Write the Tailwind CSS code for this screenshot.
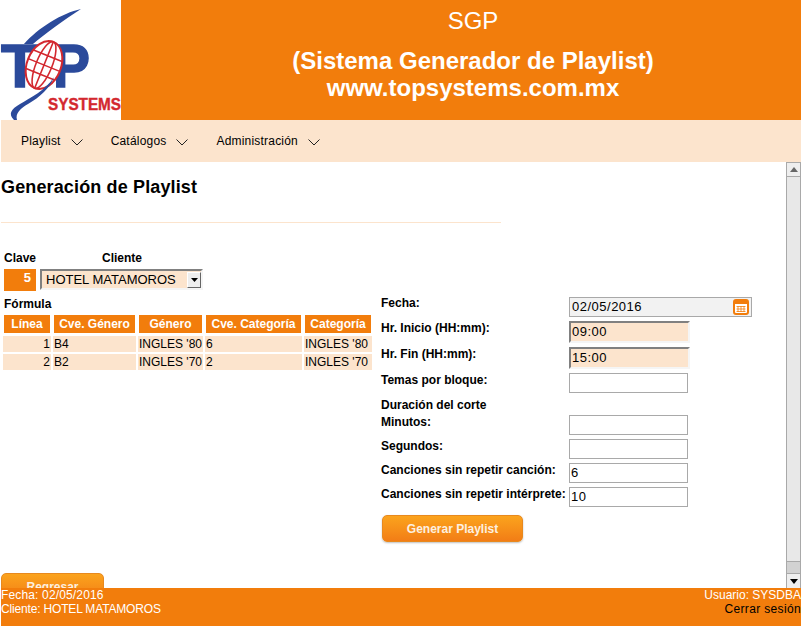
<!DOCTYPE html>
<html lang="es">
<head>
    <meta charset="UTF-8">
    <title>SGP</title>
    <script src="https://cdn.jsdelivr.net/npm/@tailwindcss/browser@4"></script>
</head>
<body class="bg-white h-[626px] w-[801px] overflow-hidden flex flex-col font-['Liberation_Sans',Arial,sans-serif] text-xs text-black">

<!-- encabezado -->
<header class="h-[120px] flex shrink-0">
    <div class="w-[121px] bg-white">
        <svg width="121" height="120" viewBox="0 0 121 120">
            <path d="M81 9 C62 13 38 28 24 44 L33 44 C46 33 64 20 81 9Z" fill="#2b4a9b"/>
            <text x="1" y="87" font-family="Liberation Sans" font-weight="700" font-size="62" stroke="#2b4a9b" stroke-width="1.5" fill="#2b4a9b">T</text>
            <text x="53" y="87" font-family="Liberation Sans" font-weight="700" font-size="62" textLength="37" lengthAdjust="spacingAndGlyphs" stroke="#2b4a9b" stroke-width="1.5" fill="#2b4a9b">P</text>
            <g transform="rotate(22 44 65)" fill="none" stroke="#d3282f" stroke-width="1.6">
                <ellipse cx="44" cy="65" rx="17" ry="25" fill="#fff" stroke-width="2"/>
                <ellipse cx="44" cy="65" rx="8" ry="25"/>
                <path d="M44 40V90M28 55H60M27 65H61M28 75H60"/>
            </g>
            <path d="M54 77 C46 90 30 98 20 104 C11 109 8 114 14 120 L17 120 C15 113 21 108 28 104 C40 97 50 88 54 77Z" fill="#2b4a9b"/>
            <text x="48" y="110" font-family="Liberation Sans" font-weight="700" font-size="17" textLength="73" lengthAdjust="spacingAndGlyphs" stroke="#d3282f" stroke-width="0.4" fill="#d3282f">SYSTEMS</text>
        </svg>
    </div>
    <div class="flex-1 bg-[#f27d0c] text-white text-center pl-[24px]">
        <div class="text-[24px] leading-[28px] pt-[7px]">SGP</div>
        <div class="text-[24px] leading-[27px] font-bold mt-[12px]">(Sistema Generador de Playlist)<br>www.topsystems.com.mx</div>
    </div>
</header>

<!-- menu -->
<nav class="h-[42px] ml-px bg-[#fce4cd] flex items-center shrink-0 pl-[20px] tracking-[0.2px]">
    <span>Playlist</span>
    <svg class="ml-[10px] mt-[3px]" width="12" height="7" viewBox="0 0 12 7"><path d="M0.5 0.5L6 6L11.5 0.5" fill="none" stroke="#222" stroke-width="1"/></svg>
    <span class="ml-[28px]">Catálogos</span>
    <svg class="ml-[10px] mt-[3px]" width="12" height="7" viewBox="0 0 12 7"><path d="M0.5 0.5L6 6L11.5 0.5" fill="none" stroke="#222" stroke-width="1"/></svg>
    <span class="ml-[28px]">Administración</span>
    <svg class="ml-[10px] mt-[3px]" width="12" height="7" viewBox="0 0 12 7"><path d="M0.5 0.5L6 6L11.5 0.5" fill="none" stroke="#222" stroke-width="1"/></svg>
</nav>

<div class="flex h-[426px] shrink-0">
    <main class="w-[786px] overflow-hidden pl-px">
        <h1 class="text-[18px] leading-[22px] font-bold mt-[14px] tracking-[0.14px]">Generación de Playlist</h1>
        <div class="w-[500px] h-px bg-[#fce4cd] mt-[24px]"></div>

        <div class="flex mt-[28px] font-bold leading-[14px]">
            <span class="w-[101px] pl-[3px]">Clave</span><span>Cliente</span>
        </div>
        <div class="flex items-start mt-[4px] ml-[3px]">
            <div class="w-[32px] h-[22px] bg-[#f27d0c] text-white font-bold text-[13px] text-right pr-[5px] leading-[18px]">5</div>
            <div class="ml-[4px] w-[163px] h-[21px] bg-[#fce4cd] border-2 border-t-[#808080] border-l-[#808080] border-r-[#f5f5f5] border-b-[#f5f5f5] flex items-center pl-[4px] text-[13px]">
                <span class="flex-1">HOTEL MATAMOROS</span>
                <span class="w-[14px] h-[16px] bg-[#eeeeee] border border-t-white border-l-white border-r-[#666] border-b-[#666] flex items-center justify-center">
                    <svg width="7" height="4" viewBox="0 0 7 4"><path d="M0 0H7L3.5 4Z" fill="#000"/></svg>
                </span>
            </div>
        </div>

        <div class="flex">
            <div class="w-[380px]">
                <div class="font-bold leading-[14px] mt-[6px] ml-[3px]">Fórmula</div>
                <table class="border-separate border-spacing-[2px] mt-[1px] table-fixed whitespace-nowrap w-[373px]">
                    <thead>
                        <tr class="text-white font-bold text-center">
                            <th class="w-[48px] h-[20px] p-0 bg-[#f27d0c] border border-white">Línea</th>
                            <th class="w-[83px] p-0 bg-[#f27d0c] border border-white">Cve. Género</th>
                            <th class="w-[65px] p-0 bg-[#f27d0c] border border-white">Género</th>
                            <th class="w-[97px] p-0 bg-[#f27d0c] border border-white">Cve. Categoría</th>
                            <th class="w-[68px] p-0 bg-[#f27d0c] border border-white">Categoría</th>
                        </tr>
                    </thead>
                    <tbody>
                        <tr class="bg-[#fce4cd]">
                            <td class="h-[16px] p-0 text-right pr-px">1</td><td class="p-0 pl-px">B4</td><td class="p-0 pl-px">INGLES '80</td><td class="p-0 pl-px">6</td><td class="p-0 pl-px">INGLES '80</td>
                        </tr>
                        <tr class="bg-[#fce4cd]">
                            <td class="h-[16px] p-0 text-right pr-px">2</td><td class="p-0 pl-px">B2</td><td class="p-0 pl-px">INGLES '70</td><td class="p-0 pl-px">2</td><td class="p-0 pl-px">INGLES '70</td>
                        </tr>
                    </tbody>
                </table>
            </div>

            <!-- formulario -->
            <div class="mt-[6px] font-bold">
                <div class="flex h-[20px]">
                    <label class="w-[188px] -mt-[2px]">Fecha:</label>
                    <div class="w-[183px] h-[20px] bg-[#f2f2f2] border border-[#a9a9a9] flex items-center pl-[2px] pr-[2px] text-[13px] font-normal tracking-[0.5px]">
                        <span class="flex-1">02/05/2016</span>
                        <svg width="16" height="16" viewBox="0 0 16 16">
                            <rect x="1" y="1" width="14" height="14" rx="2" fill="#fff" stroke="#f27d0c" stroke-width="2"/>
                            <rect x="1" y="2" width="14" height="3" fill="#f27d0c"/>
                            <path d="M3.5 7.5H12.5M3.5 10H12.5M3.5 12.5H12.5M5 7V13M8 7V13M11 7V13" stroke="#f27d0c" stroke-width="0.8"/>
                        </svg>
                    </div>
                </div>
                <div class="flex h-[22px] mt-[4px]">
                    <label class="w-[188px] -mt-px">Hr. Inicio (HH:mm):</label>
                    <div class="w-[121px] h-[22px] bg-[#fce4cd] border-2 border-t-[#808080] border-l-[#808080] border-r-[#f5f5f5] border-b-[#f5f5f5] pl-px text-[13px] leading-[18px] font-normal tracking-[0.5px]">09:00</div>
                </div>
                <div class="flex h-[22px] mt-[4px]">
                    <label class="w-[188px] -mt-px">Hr. Fin (HH:mm):</label>
                    <div class="w-[121px] h-[22px] bg-[#fce4cd] border-2 border-t-[#808080] border-l-[#808080] border-r-[#f5f5f5] border-b-[#f5f5f5] pl-px text-[13px] leading-[17px] font-normal tracking-[0.5px]">15:00</div>
                </div>
                <div class="flex h-[20px] mt-[4px]">
                    <label class="w-[188px] -mt-px">Temas por bloque:</label>
                    <div class="w-[119px] h-[20px] border border-[#a9a9a9]"></div>
                </div>
                <div class="h-[14px] mt-[5px] leading-[14px]">Duración del corte</div>
                <div class="flex h-[20px] mt-[3px]">
                    <label class="w-[188px] -mt-px">Minutos:</label>
                    <div class="w-[119px] h-[20px] border border-[#a9a9a9]"></div>
                </div>
                <div class="flex h-[20px] mt-[4px]">
                    <label class="w-[188px] -mt-px">Segundos:</label>
                    <div class="w-[119px] h-[20px] border border-[#a9a9a9]"></div>
                </div>
                <div class="flex h-[20px] mt-[4px]">
                    <label class="w-[188px] -mt-px">Canciones sin repetir canción:</label>
                    <div class="w-[119px] h-[20px] border border-[#a9a9a9] pl-px text-[13px] leading-[18px] font-normal tracking-[0.5px]">6</div>
                </div>
                <div class="flex h-[20px] mt-[4px]">
                    <label class="w-[188px] -mt-px">Canciones sin repetir intérprete:</label>
                    <div class="w-[119px] h-[20px] border border-[#a9a9a9] pl-px text-[13px] leading-[18px] font-normal tracking-[0.5px]">10</div>
                </div>
                <button class="block w-[141px] h-[27px] mt-[8px] ml-px rounded-[5px] border border-[#e8891e] bg-linear-to-b from-[#fba31d] to-[#f27d16] text-[#fdf0e0] font-bold shadow-[0_1px_2px_rgba(0,0,0,0.25)]">Generar Playlist</button>
            </div>
        </div>

        <button class="block w-[103px] h-[27px] mt-[31px] rounded-[5px] border border-[#e8891e] bg-linear-to-b from-[#fba31d] to-[#f27d16] text-[#fdf0e0] font-bold">Regresar</button>
    </main>

    <!-- barra de desplazamiento -->
    <div class="w-[15px] border-l border-r border-[#a9a9a9] bg-[#e8e8e8] flex flex-col">
        <div class="h-[15px] border-t border-b border-[#a9a9a9] bg-[#eeeeee] flex items-center justify-center">
            <svg width="8" height="5" viewBox="0 0 8 5"><path d="M0 5H8L4 0Z" fill="#666"/></svg>
        </div>
        <div class="flex-1"></div>
        <div class="h-[12px] border-t border-[#a9a9a9] bg-[#d2d2d2]"></div>
        <div class="h-[15px] border-t border-[#a9a9a9] bg-[#eeeeee] flex items-center justify-center">
            <svg width="8" height="5" viewBox="0 0 8 5"><path d="M0 0H8L4 5Z" fill="#000"/></svg>
        </div>
    </div>
</div>

<!-- pie -->
<footer class="h-[38px] ml-px bg-[#f27d0c] flex justify-between text-white leading-[14px] shrink-0">
    <div>
        <div class="tracking-[0.15px]">Fecha: 02/05/2016</div>
        <div class="tracking-[-0.17px]">Cliente: HOTEL MATAMOROS</div>
    </div>
    <div class="text-right">
        <div>Usuario: SYSDBA</div>
        <a class="block text-black tracking-[0.35px]">Cerrar sesión</a>
    </div>
</footer>
</body>
</html>
